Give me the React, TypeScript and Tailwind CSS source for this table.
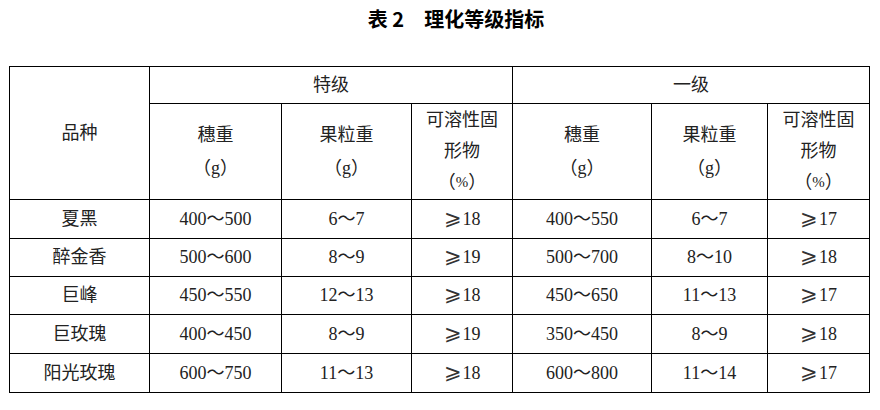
const rows = [
  ["夏黑", "400～500", "6～7", "⩾18", "400～550", "6～7", "⩾17"],
  ["醉金香", "500～600", "8～9", "⩾19", "500～700", "8～10", "⩾18"],
  ["巨峰", "450～550", "12～13", "⩾18", "450～650", "11～13", "⩾17"],
  ["巨玫瑰", "400～450", "8～9", "⩾19", "350～450", "8～9", "⩾18"],
  ["阳光玫瑰", "600～750", "11～13", "⩾18", "600～800", "11～14", "⩾17"],
];

const rowHeights = ["h-[38px]", "h-[37px]", "h-[37px]", "h-[38px]", "h-[38px]"];

function Cell({ children, className = "" }: { children: React.ReactNode; className?: string }) {
  return (
    <div className={`flex flex-col items-center justify-center bg-white ${className}`}>
      {children}
    </div>
  );
}

// the slanted "greater or equal" sign sits in DejaVu, the digits stay serif
function Value({ text }: { text: string }) {
  if (!text.startsWith("⩾")) return <span>{text}</span>;
  return (
    <span>
      <span className="mr-[1px] text-[21px] leading-none font-light text-[#333] [font-family:'DejaVu_Sans',sans-serif]">⩾</span>
      {text.slice(1)}
    </span>
  );
}

// full-width brackets, kept a full em wide each
function Unit({ children }: { children: React.ReactNode }) {
  return (
    <span className="flex items-center">
      <span className="inline-block w-[18px] text-right">（</span>
      {children}
      <span className="inline-block w-[18px] text-left">）</span>
    </span>
  );
}

function SubHeader() {
  return (
    <>
      <Cell className="leading-[33px]">
        <span>穗重</span>
        <Unit>g</Unit>
      </Cell>
      <Cell className="leading-[33px]">
        <span>果粒重</span>
        <Unit>g</Unit>
      </Cell>
      <Cell className="leading-[31px]">
        <span>可溶性固</span>
        <span>形物</span>
        <Unit>
          <span className="text-[15px]">%</span>
        </Unit>
      </Cell>
    </>
  );
}

export default function App() {
  return (
    <div className="h-[410px] w-[880px] bg-white text-[#222]">
      <h1 className="pl-[32px] pt-[6px] text-center text-[20px] font-bold leading-[26px] text-black [font-family:'Noto_Sans_CJK_SC',sans-serif]">
        表 2　理化等级指标
      </h1>
      <div className="ml-[9px] mt-[34px] grid w-[861px] grid-cols-[139px_131px_129px_100px_138px_115px_101px] grid-rows-[36px_95px] gap-px bg-black p-px text-[18px] [font-family:'Liberation_Serif','Noto_Sans_CJK_SC',serif]">
        <Cell className="row-span-2">品种</Cell>
        <Cell className="col-span-3">特级</Cell>
        <Cell className="col-span-3">一级</Cell>
        <div className="col-span-3 grid grid-cols-[131px_129px_100px] gap-px">
          <SubHeader />
        </div>
        <div className="col-span-3 grid grid-cols-[138px_115px_101px] gap-px">
          <SubHeader />
        </div>
        {rows.map((row, i) =>
          row.map((v, j) => (
            <Cell key={`${i}-${j}`} className={rowHeights[i]}>
              <Value text={v} />
            </Cell>
          ))
        )}
      </div>
    </div>
  );
}
